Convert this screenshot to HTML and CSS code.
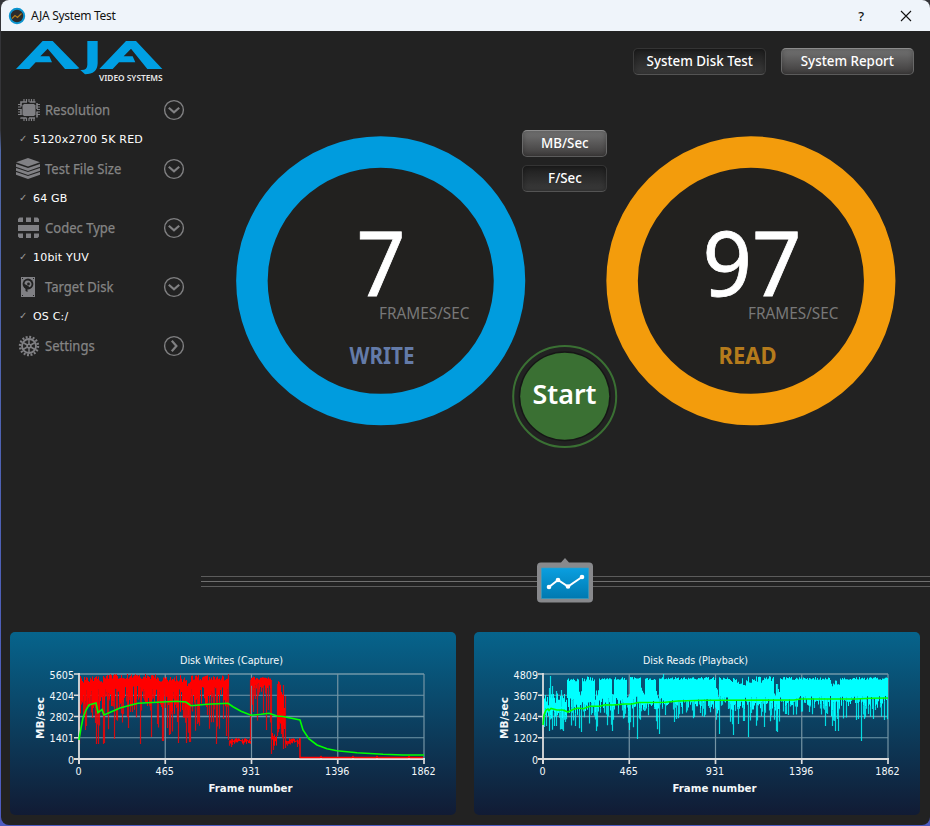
FILE: index.html
```html
<!DOCTYPE html>
<html lang="en">
<head>
<meta charset="utf-8">
<title>AJA System Test</title>
<link rel="stylesheet" href="styles.css">
</head>
<body>
<svg class="defs" width="0" height="0">
  <defs>
    <linearGradient id="badge" x1="0" y1="0" x2="0" y2="1"><stop offset="0" stop-color="#0a9fe0"/><stop offset="1" stop-color="#0079b0"/></linearGradient>
    <symbol id="down" viewBox="0 0 22 22"><circle cx="11" cy="11" r="9.4" fill="none" stroke="#808082" stroke-width="1.4"/><path d="M5.8 8.8 11 13.4l5.2-4.6" fill="none" stroke="#808082" stroke-width="2.2"/></symbol>
    <symbol id="right" viewBox="0 0 22 22"><circle cx="11" cy="11" r="9.4" fill="none" stroke="#808082" stroke-width="1.4"/><path d="M8.8 5.8 13.4 11l-4.6 5.2" fill="none" stroke="#808082" stroke-width="2.2"/></symbol>
  </defs>
</svg>
<div class="window">
  <header class="titlebar">
    <svg class="app-icon" width="18" height="18" viewBox="0 0 18 18"><circle cx="9" cy="9" r="7.2" fill="#2c2c2c" stroke="#0c94cf" stroke-width="2"/><path d="M4 11.5 7 8.500 9.500 10.500 13.500 6.500" fill="none" stroke="#b07b1c" stroke-width="1.300"/></svg>
    <span class="app-title">AJA System Test</span>
    <span class="help">?</span>
    <svg class="close" width="12" height="12" viewBox="0 0 12 12"><path d="M1 1 11 11M11 1 1 11" stroke="#111" stroke-width="1.100"/></svg>
  </header>

  <div class="body">
    <aside class="sidebar">
      <svg class="logo" width="150" height="44" viewBox="45 120 450 132">
        <g fill="#009fe3">
          <path d="M48 207 128 123h30l80 82-8 2h-35L143 146l-22 23h27l8 18H107L88 207z"/>
          <path d="M262 123h31v67q-1 33-38 33l-14-13q21 2 21-16z"/>
          <path d="M298 207 378 123h30l79 84h-45L393 146l-22 23h27l8 18H357L338 207z"/>
        </g>
        <text x="297" y="243" class="logo-sub" textLength="191" lengthAdjust="spacingAndGlyphs">VIDEO SYSTEMS</text>
      </svg>
      <nav class="menu">
        <div class="item">
          <svg class="ico" width="26" height="26" viewBox="0 0 26 26"><g stroke="#808084" stroke-width="1.200"><path d="M9 2v22M11.500 2v22M14 2v22M16.500 2v22M19 2v22M3 7.500h22M3 10h22M3 12.500h22M3 15h22M3 17.500h22"/></g><path d="M6 5h16v16H6z" fill="#222" stroke="#808084" stroke-width="1.600" stroke-dasharray="6 2.500"/><path d="M9 7h10l1.500 1.500v9L19 19H9l-1.500-1.500v-9z" fill="#808084"/></svg>
          <span class="name"><b>Resolution</b></span><svg class="arrow" width="22" height="22"><use href="#down"/></svg>
        </div>
        <div class="value"><i>✓</i>5120x2700 5K RED</div>
        <div class="item">
          <svg class="ico" width="26" height="26" viewBox="0 0 26 26"><g fill="#808084"><path d="M1 6.200 13 2l12 4.200-12 4.300z"/><path id="layer" d="M1 8 13 12 25 8v2.800L13 15 1 10.800z"/><use href="#layer" y="4"/><use href="#layer" y="8"/></g></svg>
          <span class="name"><b>Test File Size</b></span><svg class="arrow" width="22" height="22"><use href="#down"/></svg>
        </div>
        <div class="value"><i>✓</i>64 GB</div>
        <div class="item">
          <svg class="ico" width="26" height="26" viewBox="0 0 26 26"><path fill="#808084" d="M3 7V4L4.500 2.500H8V7zM11 2.500h5V7h-5zM19 2.500h3.500L24 4v3h-5zM3 10h21v6H3zM3 18.500h5V23H4.500L3 21.500zM11 18.500h5V23h-5zM19 18.500h5v3L22.500 23H19z"/></svg>
          <span class="name"><b>Codec Type</b></span><svg class="arrow" width="22" height="22"><use href="#down"/></svg>
        </div>
        <div class="value"><i>✓</i>10bit YUV</div>
        <div class="item">
          <svg class="ico" width="26" height="26" viewBox="0 0 26 26"><path d="M6 3h14v20H6z" fill="#808084"/><circle cx="13" cy="10" r="5.400" fill="#222"/><path d="M9.500 10a3.500 3.500 0 1 1 5 3.200l-1.500-1.400" fill="#808084"/><circle cx="13.500" cy="10" r="1.400" fill="#222"/><path d="M12.500 12v6l-2-1v-3z" fill="#222"/><path d="M7 4h1v1H7zM18 4h1v1h-1zM7 21h1v1H7zM18 21h1v1h-1z" fill="#222"/></svg>
          <span class="name"><b>Target Disk</b></span><svg class="arrow" width="22" height="22"><use href="#down"/></svg>
        </div>
        <div class="value"><i>✓</i>OS C:/</div>
        <div class="item">
          <svg class="ico" width="26" height="26" viewBox="0 0 26 26"><g fill="none" stroke="#808084"><circle cx="14" cy="13" r="9" stroke-width="2.400" stroke-dasharray="1.900 1.630"/><circle cx="14" cy="13" r="7" stroke-width="1.900"/><path d="M14 6v14M8 9.500l12 7M20 9.500l-12 7" stroke-width="1.500"/></g><circle cx="14" cy="13" r="2.600" fill="#808084"/><circle cx="14" cy="13" r="1" fill="#222"/></svg>
          <span class="name"><b>Settings</b></span><svg class="arrow" width="22" height="22"><use href="#right"/></svg>
        </div>
      </nav>
    </aside>

    <main class="stage">
      <div class="tabs">
        <button class="btn down wide"><span>System Disk Test</span></button>
        <button class="btn up wide"><span>System Report</span></button>
      </div>
      <div class="gauges">
        <svg class="gauge" width="290" height="290" viewBox="0 0 290 290">
          <circle cx="144.700" cy="144.800" r="128.800" fill="#22211f" stroke="#009cde" stroke-width="31.500"/>
          <text x="120.500" y="160" class="num" textLength="49" lengthAdjust="spacingAndGlyphs">7</text>
          <text x="143" y="183" class="unit" textLength="90.500" lengthAdjust="spacingAndGlyphs">FRAMES/SEC</text>
          <text x="113.500" y="228" class="kind write" textLength="65" lengthAdjust="spacingAndGlyphs">WRITE</text>
        </svg>
        <div class="controls">
          <button class="btn up"><span>MB/Sec</span></button>
          <button class="btn down"><span>F/Sec</span></button>
          <svg class="start" width="106" height="104" viewBox="0 0 106 104">
            <ellipse cx="52.700" cy="51.500" rx="51.500" ry="50.500" fill="#222" stroke="#3a7033" stroke-width="2"/>
            <ellipse cx="52.700" cy="51.300" rx="46" ry="45" fill="#161616"/>
            <ellipse cx="52.700" cy="51.300" rx="44.500" ry="43.500" fill="#3a7033"/>
            <text x="20.500" y="59" class="start-text" textLength="64" lengthAdjust="spacingAndGlyphs">Start</text>
          </svg>
        </div>
        <svg class="gauge" width="290" height="290" viewBox="0 0 290 290">
          <circle cx="144.900" cy="144.800" r="128.800" fill="#22211f" stroke="#f39c0c" stroke-width="31.500"/>
          <text x="96.500" y="160" class="num" textLength="99" lengthAdjust="spacingAndGlyphs">97</text>
          <text x="142" y="183" class="unit" textLength="90.500" lengthAdjust="spacingAndGlyphs">FRAMES/SEC</text>
          <text x="112.500" y="228" class="kind read" textLength="58" lengthAdjust="spacingAndGlyphs">READ</text>
        </svg>
      </div>
    </main>
  </div>

  <div class="divider">
    <svg class="badge" width="56" height="46" viewBox="0 0 56 46"><path d="M24 4.500l4-4.500 4 4.500h20q4 0 4 4v32q0 4-4 4H4q-4 0-4-4v-32q0-4 4-4z" fill="#88898c"/><path d="M4.500 10h47v30.500h-47z" fill="url(#badge)" stroke="#2f9fc8" stroke-width=".6"/><path d="M12 29l9-7 10 6.500 14-9.500" fill="none" stroke="#fff" stroke-width="2"/><g fill="#fff"><circle cx="12" cy="29" r="2.300"/><circle cx="21" cy="22" r="2.300"/><circle cx="31" cy="28.500" r="2.300"/><circle cx="45" cy="19" r="2.300"/></g></svg>
  </div>

  <section class="charts">
    <div class="chart" id="writes"></div>
    <div class="chart" id="reads"></div>
  </section>
</div>
<script src="charts.js"></script>
</body>
</html>
```
FILE: styles.css
```css
* { box-sizing: border-box; }
body { margin: 0; width: 930px; height: 826px; overflow: hidden; background: linear-gradient(180deg, #343438 0 130px, #5068a8 150px, #4d5bc0 100%); font-family: "Noto Sans", sans-serif; }
.defs { display: block; }
.window { width: 929px; height: 825px; margin-left: 1px; background: #222; border-radius: 8px; overflow: hidden; display: flex; flex-direction: column; }
.titlebar { height: 31px; flex: none; background: #eff4fa; display: flex; align-items: center; padding: 0 18px 0 7px; }
.app-icon { flex: none; }
.app-title { font-size: 12px; color: #111; margin-left: 5px; letter-spacing: -.3px; line-height: 31px; }
.help { margin-left: auto; font-size: 13px; font-weight: 500; color: #111; margin-right: 36px; }
.body { display: flex; height: 529px; flex: none; }
.sidebar { width: 200px; padding: 9px 0 0 14px; flex: none; }
.logo { display: block; }
.logo-sub { font: 600 25px "Noto Sans", sans-serif; fill: #e8e8e8; }
.menu { margin-top: 11px; }
.item { display: flex; align-items: center; height: 30px; }
.ico { flex: none; }
.name { width: 118px; margin-left: 4px; margin-top: -2px; white-space: nowrap; color: #858585; }
.name b { display: inline-block; font-weight: 400; font-size: 15px; transform: scaleX(.87); transform-origin: 0 50%; -webkit-text-stroke: .25px #858585; }
.value { height: 29px; line-height: 29px; padding-left: 4px; font-family: "DejaVu Sans", sans-serif; font-size: 11px; letter-spacing: .2px; color: #fff; display: flex; }
.value i { width: 14px; font-style: normal; font-size: 10px; color: #999; line-height: 27px; }
.stage { flex: 1; min-width: 0; }
.tabs { display: flex; justify-content: flex-end; gap: 15px; padding: 17px 16px 0 0; }
.btn { height: 27px; width: 85px; padding: 0 0 2px; border: 1px solid #555; border-radius: 5px; color: #fff; font: 500 15px "Noto Sans", sans-serif; line-height: 23px; white-space: nowrap; }
.btn span { display: inline-block; transform: scaleX(.89); margin: 0 -12px; }
.btn.wide { width: 133px; }
.btn.up { background: linear-gradient(#737373, #3e3c3c); border-color: #8c8c8c #696969 #5b5b5b; box-shadow: inset 0 0 5px #0004; }
.btn.down { background: linear-gradient(#1d1d1d, #3b3b3b); border-color: #343434 #3c3c3c #545454; box-shadow: inset 0 0 5px #0005; }
.gauges { display: grid; grid-template-columns: 290px 80px 290px; margin: 61px 0 0 35px; }
.gauge { display: block; }
.controls { display: flex; flex-direction: column; align-items: center; gap: 8px; margin: -6px 3px 0 0; z-index: 1; }
.controls .btn, .start { flex: none; }
.start { margin-top: 145px; }
.num { font: 400 90px "Noto Sans", sans-serif; fill: #fff; stroke: #fff; stroke-width: .8px; }
.unit { font: 400 17px "Noto Sans", sans-serif; fill: #787878; }
.kind { font: 700 22.500px "Noto Sans", sans-serif; }
.write { fill: #647ba8; }
.read { fill: #b57b1c; }
.start-text { font: 600 26.500px "Noto Sans", sans-serif; fill: #fff; }
.divider { height: 72px; flex: none; margin-left: 200px; padding-left: 336px; background: linear-gradient(#5c5c5c, #5c5c5c) 0 16px / 100% 1px no-repeat, linear-gradient(#707070, #707070) 0 21px / 100% 1px no-repeat, linear-gradient(#5c5c5c, #5c5c5c) 0 26px / 100% 1px no-repeat; }
.badge { display: block; margin-top: -2px; }
.charts { display: flex; gap: 18px; padding-left: 9px; }
.chart { width: 446px; height: 183px; border-radius: 5px; background: linear-gradient(#06648c, #111b34); overflow: hidden; }
.chart svg { display: block; }
.chart text { font: 11px "DejaVu Sans Condensed", "DejaVu Sans", sans-serif; fill: #f4f8fa; }
.chart .strong { font-weight: 700; }
```
FILE: charts.js
```js
// Each band: [from x, to x, top min, top max, short min, short max, long max, chance of a long bar]
const X0 = 69, Y0 = 42, W = 345, H = 85;

function generator(seed) {
  return () => (seed = (seed * 16807) % 2147483647) / 2147483647;
}

function bars(bands, spikes, seed) {
  const rnd = generator(seed);
  let solid = '', faint = '';
  for (const [a, b, t0, t1, s0, s1, l, p] of bands) {
    for (let x = a; x < b; x++) {
      const top = t0 + rnd() * (t1 - t0);
      const short = s0 + rnd() * (s1 - s0);
      solid += `M${x + 0.5} ${top.toFixed(1)}V${short.toFixed(1)}`;
      if (rnd() < p) faint += `M${x + 0.5} ${short.toFixed(1)}V${(short + rnd() * (l - short)).toFixed(1)}`;
    }
  }
  for (const [x, top, bottom] of spikes) faint += `M${x + 0.5} ${top}V${bottom}`;
  return [solid, faint];
}

function draw(id, o) {
  const [solid, faint] = bars(o.bands, o.spikes, o.seed);
  let g = '';
  for (let i = 0; i < 4; i++) g += `<path d="M0 ${i * H / 4}H${W}" stroke="#7097a9" stroke-width="${i % 2 ? 1 : 1.3}"/>`;
  for (let i = 1; i <= 4; i++) g += `<path d="M${i * W / 4} 0V${H}" stroke="#7594a4" stroke-width="1.2"/>`;
  let axes = `<path d="M0 -1V${H + 5}M-5 ${H}H${W + 1}" stroke="#ddd" stroke-width="1.8" fill="none"/>`;
  for (let i = 0; i <= 4; i++) {
    axes += `<path d="M-5 ${i * H / 4}H0M${i * W / 4} ${H}v5" stroke="#ddd" stroke-width="1.7"/>`;
    const y = o.y[i], x = [0, 465, 931, 1396, 1862][i];
    axes += `<text x="-5" y="${H - i * H / 4 + 4.5}" text-anchor="end" textLength="${String(y).length * 6.1}" lengthAdjust="spacingAndGlyphs">${y}</text>`;
    axes += `<text x="${i * W / 4 - 0.5}" y="${H + 16}" text-anchor="middle" textLength="${String(x).length * 6.1}" lengthAdjust="spacingAndGlyphs">${x}</text>`;
  }
  document.getElementById(id).innerHTML = `<svg width="446" height="183">
    <text x="${o.titleX}" y="32" textLength="${o.titleW}" lengthAdjust="spacingAndGlyphs">${o.title}</text>
    <g transform="translate(${X0} ${Y0})">${g}
      <path d="${solid}" stroke="${o.color}" stroke-width="1.05"/>
      <path d="${faint}" stroke="${o.color}" stroke-width="1.2" opacity=".82"/>
      ${axes}
      ${o.base ? `<path d="${o.base}" stroke="red" stroke-width="1.5" fill="none"/>` : ''}
      <polyline points="${o.avg}" fill="none" stroke="#0f0" stroke-width="1.6"/>
    </g>
    <text class="strong" x="240.500" y="160" text-anchor="middle" textLength="84" lengthAdjust="spacingAndGlyphs">Frame number</text>
    <text class="strong" transform="translate(33.500 107) rotate(-90)" textLength="42" lengthAdjust="spacingAndGlyphs">MB/sec</text>
  </svg>`;
}

draw('writes', {
  title: 'Disk Writes (Capture)', titleX: 170, titleW: 103, color: '#f00', seed: 4211,
  y: [0, 1401, 2802, 4204, 5605],
  bands: [
    [1, 25, 2, 9, 14, 42, 56, .7], [25, 80, 0, 5, 12, 36, 58, .7], [80, 108, 1, 8, 14, 38, 60, .7],
    [108, 112, 5, 14, 14, 45, 62, .7], [112, 150, 1, 7, 11, 34, 58, .65], [150, 172, 64, 67, 67, 70, 72, .3],
    [172, 192, 2, 6, 9, 18, 52, .5], [193, 198, 54, 64, 65, 73, 79, .5],
    [198, 203, 6, 22, 45, 58, 64, .5], [203, 206, 20, 40, 50, 60, 66, .5], [206, 221, 64, 67, 67, 70, 73, .3]
  ],
  spikes: [[0, 28, 70], [17, 10, 70], [19, 10, 70], [24, 10, 70], [25, 10, 69], [35, 10, 65], [61, 10, 70], [72, 10, 63], [83, 10, 67], [84, 10, 67], [90, 10, 61], [99, 10, 69], [107, 10, 69], [110, 15, 68], [111, 15, 68], [137, 10, 70], [147, 10, 62], [149, 0, 66], [152, 65, 73], [171, 6, 66], [187, 10, 56], [192, 6, 80], [198, 10, 52], [200, 8, 55], [202, 28, 60], [204, 11, 75], [206, 22, 74]],
  base: 'M221 64V83.500h20l1-1 1 1h30l1-1 1 1h22l1-1 1 1h30l1-1 1 1h13',
  avg: '0,66 2,54 4,44 7,36 10,31 17,29 19,38.5 23,35.500 25,41 33,37.500 41,34 51,31.300 59,29.300 78,28.300 98,27.300 107,28 112,31.700 128,30.300 149,29.300 154,32.700 162,37.300 172,41.300 182,40.300 190,39.300 198,42 204,42.500 221,46 224,56 230,65 238,71 248,74.700 258,76.700 278,78.700 304,80.300 324,81 345,81'
});

draw('reads', {
  title: 'Disk Reads (Playback)', titleX: 169, titleW: 105, color: '#0ff', seed: 7717,
  y: [0, 1202, 2404, 3607, 4809],
  bands: [
    [0, 24, 19, 34, 34, 45, 56, .7], [24, 36, 4, 8, 24, 40, 53, .5], [36, 39, 15, 22, 30, 38, 56, .8],
    [39, 52, 2, 8, 24, 38, 50, .5], [52, 56, 14, 30, 32, 40, 56, .6], [56, 69, 4, 6, 24, 37, 52, .45],
    [69, 71, 15, 30, 30, 38, 54, .7], [71, 84, 3, 6, 24, 36, 54, .5], [84, 87, 20, 30, 30, 38, 54, .5],
    [87, 98, 3, 6, 22, 35, 54, .5], [98, 102, 12, 22, 30, 36, 48, .5], [102, 113, 4, 6, 24, 36, 47, .5],
    [113, 116, 16, 26, 27, 36, 57, .6], [116, 173, 3, 6, 24, 35, 46, .45], [173, 176, 12, 26, 28, 44, 58, .6],
    [176, 188, 3, 6, 22, 34, 48, .45], [188, 205, 4, 12, 23, 37, 54, .6], [205, 231, 2, 9, 23, 37, 52, .5],
    [231, 237, 8, 22, 30, 45, 54, .5], [237, 288, 3, 6, 22, 33, 42, .45], [288, 297, 5, 13, 27, 44, 57, .5],
    [297, 345, 3, 6, 22, 34, 46, .45]
  ],
  spikes: [[6, 14, 57], [7, 2, 40], [9, 12, 38], [13, 17, 50], [18, 16, 55], [20, 24, 57], [38, 20, 58], [53, 20, 57], [69, 20, 57], [86, 20, 56], [94, 20, 65], [116, 20, 60], [120, 0, 20], [131, 10, 48], [176, 10, 60], [190, 10, 61], [205, 10, 63], [221, 10, 53], [233, 10, 57], [234, 10, 58], [282, 10, 52], [292, 10, 57], [295, 10, 57], [318, 10, 67]],
  avg: '0,51 1,41 3,36 5,35 6,36.500 8,34.500 14,36 20,36 25,38 30,35.500 35,34 40,34.700 47,32.300 57,32.300 62,30.700 70,31 82,30 89,30 95,28.500 122,28.300 135,27 160,26.300 251,26 258,25 313,25 327,24.300 345,24'
});
```
